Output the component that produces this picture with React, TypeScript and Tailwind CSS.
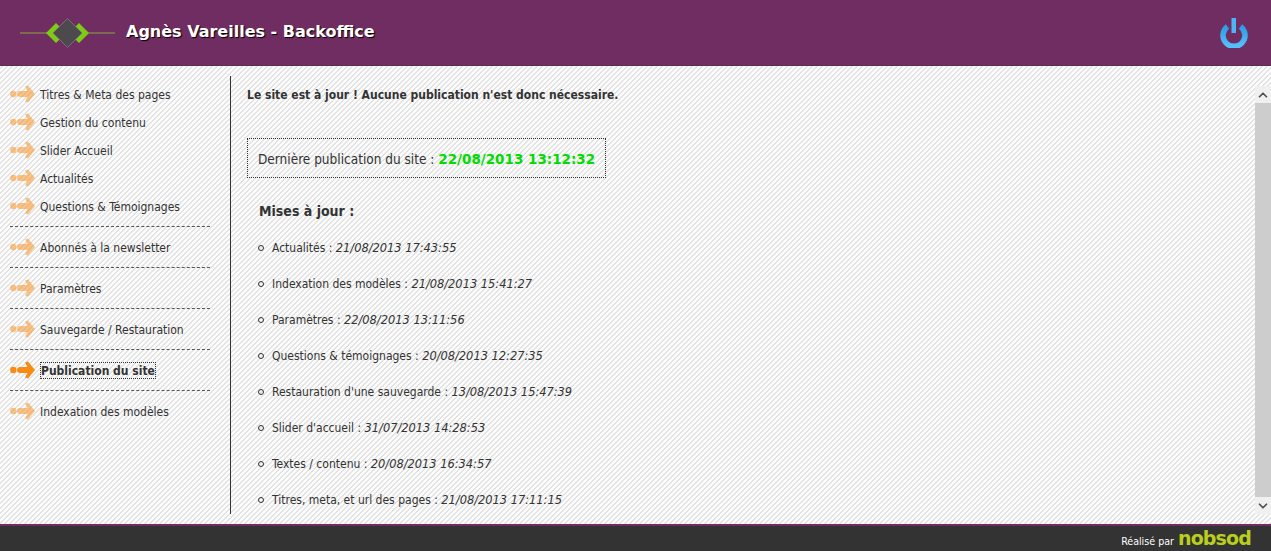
import { ChevronDown, ChevronUp } from 'lucide-react';

const menuGroups = [
  ['Titres & Meta des pages', 'Gestion du contenu', 'Slider Accueil', 'Actualités', 'Questions & Témoignages'],
  ['Abonnés à la newsletter'],
  ['Paramètres'],
  ['Sauvegarde / Restauration'],
  ['Publication du site'],
  ['Indexation des modèles'],
];

const updates = [
  ['Actualités', '21/08/2013 17:43:55'],
  ['Indexation des modèles', '21/08/2013 15:41:27'],
  ['Paramètres', '22/08/2013 13:11:56'],
  ['Questions & témoignages', '20/08/2013 12:27:35'],
  ["Restauration d'une sauvegarde", '13/08/2013 15:47:39'],
  ["Slider d'accueil", '31/07/2013 14:28:53'],
  ['Textes / contenu', '20/08/2013 16:34:57'],
  ['Titres, meta, et url des pages', '21/08/2013 17:11:15'],
];

const ArrowIcon = ({ active }: { active: boolean }) => (
  <svg width="26" height="18" viewBox="0 0 26 18" className={active ? 'shrink-0' : 'shrink-0 opacity-50'}>
    <circle cx="3.3" cy="9" r="3.2" fill="#f98a12" />
    <path
      d="M15 1.5 L18 0.5 L25 9 L18 17.5 L15 16.5 L17.5 12 L10 12 A3 3 0 0 1 10 6 L17.5 6 Z"
      fill="#f98a12"
    />
  </svg>
);

const Logo = () => (
  <svg width="96" height="32" viewBox="0 0 96 32">
    <path d="M0 16h95" stroke="#8aa83c" strokeWidth="1" />
    <path d="M36 6 L26 16 L36 26 L41 21 L36 16 L41 11 Z" fill="#7ccc12" />
    <path d="M59 6 L69 16 L59 26 L54 21 L59 16 L54 11 Z" fill="#7ccc12" />
    <path d="M47.5 1.5 L62 16 L47.5 30.5 L33 16 Z" fill="#4d4a4d" stroke="#7c6a80" strokeWidth="1" />
  </svg>
);

const PowerIcon = () => (
  <svg width="28" height="30" viewBox="0 0 28 30">
    <defs>
      <linearGradient id="power" x1="0" y1="0" x2="0" y2="1">
        <stop offset="0" stopColor="#2f9be4" />
        <stop offset="1" stopColor="#55c0fb" />
      </linearGradient>
    </defs>
    <path d="M7.5 8.5 A11 11 0 1 0 20.5 8.5" fill="none" stroke="url(#power)" strokeWidth="5.5" />
    <rect x="11.5" y="0" width="4.5" height="15" fill="#4db5f5" />
  </svg>
);

export default function App() {
  return (
    <div className="flex h-[551px] flex-col overflow-hidden bg-[linear-gradient(135deg,#fcfcfc_30%,#e3e3e3_30%,#e3e3e3_50%,#fcfcfc_50%,#fcfcfc_80%,#e3e3e3_80%)] bg-[length:5px_5px] font-['DejaVu_Sans_Condensed','DejaVu_Sans',sans-serif] text-[12px] text-[#333333]">
      <header className="flex h-[66px] shrink-0 items-center justify-between border-b border-[#5d2a59] bg-[#702d61] pl-[20px] pr-[23px]">
        <div className="flex items-center gap-[10px]">
          <Logo />
          <h1 className="mb-[2px] font-['DejaVu_Sans',sans-serif] text-[16px] font-bold text-white [text-shadow:1px_1px_1px_#000]">
            Agnès Vareilles - Backoffice
          </h1>
        </div>
        <PowerIcon />
      </header>

      <div className="flex min-h-0 flex-1 py-[10px]">
        <nav className="w-[231px] shrink-0 border-r border-[#333333] pt-[4px]">
          {menuGroups.map((group, i) => (
            <div key={i} className="ml-[10px] w-[200px] border-b border-dashed border-[#555555] py-[6px] first:pt-0 last:border-b-0">
              {group.map((label) => {
                const active = label === 'Publication du site';
                return (
                  <a key={label} className="flex h-[28px] items-center gap-[4px]">
                    <ArrowIcon active={active} />
                    <span className={active ? 'border border-dotted border-[#333333] pt-[1px] font-bold leading-[14px]' : 'pt-[2px]'}>{label}</span>
                  </a>
                );
              })}
            </div>
          ))}
        </nav>

        <main className="min-w-0 flex-1 pl-[16px] pt-[11px]">
          <p className="font-bold leading-[16px]">Le site est à jour ! Aucune publication n'est donc nécessaire.</p>
          <div className="mt-[35px] flex h-[40px] w-[359px] items-center border border-dotted border-[#333333] pl-[10px] pt-[2px] text-[13.5px]">
            <span>Dernière publication du site :&nbsp;</span>
            <strong className="font-['DejaVu_Sans',sans-serif] text-[13.5px] text-[#00dc00]">22/08/2013 13:12:32</strong>
          </div>
          <h2 className="ml-[12px] mt-[24px] text-[14px] font-bold leading-[18px]">Mises à jour :</h2>
          <ul className="ml-[11px] mt-[10px]">
            {updates.map(([label, date]) => (
              <li key={label} className="flex h-[36px] items-center">
                <span className="mr-[8px] size-[6px] rounded-full border border-[#333333]" />
                <span>{label} :&nbsp;</span>
                <em className="text-[12.7px]">{date}</em>
              </li>
            ))}
          </ul>
        </main>

        <div className="mt-[10px] flex w-[16px] shrink-0 flex-col bg-[#f0f0f0]">
          <div className="flex h-[17px] items-center justify-center">
            <ChevronUp size={14} strokeWidth={3} className="text-[#505050]" />
          </div>
          <div className="flex-1 bg-[#cdcdcd]" />
          <div className="flex h-[17px] items-center justify-center">
            <ChevronDown size={14} strokeWidth={3} className="text-[#505050]" />
          </div>
        </div>
      </div>

      <footer className="flex h-[27px] shrink-0 items-center justify-end gap-[4px] border-t-2 border-[#702d61] bg-[#333333] pr-[20px] text-[10.6px] text-white">
        <span className="mt-[7px]">Réalisé par</span>
        <span className="font-['DejaVu_Sans',sans-serif] text-[19px] font-bold leading-[25px] tracking-[-0.85px] text-[#b9ce1f]">nobsod</span>
      </footer>
    </div>
  );
}
